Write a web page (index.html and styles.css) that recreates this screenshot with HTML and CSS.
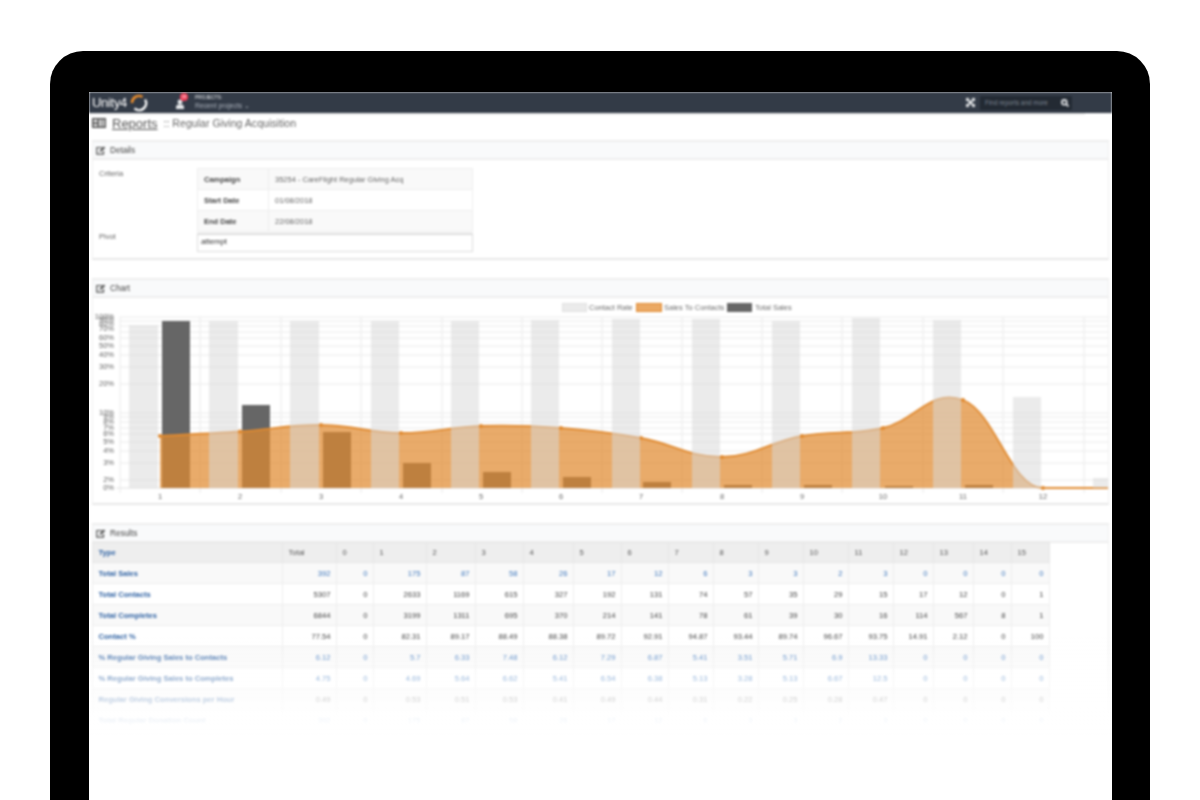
FILE: index.html
```html
<!DOCTYPE html>
<html lang="en">
<head>
<meta charset="utf-8">
<title>Unity4 Reports</title>
<link rel="stylesheet" href="styles.css">
</head>
<body>
<div class="device">
  <div class="screen">
    <div class="screen-inner">
      <header class="topbar">
        <div class="brand">
          <span class="brand-name">Unity4</span>
          <svg class="ring" width="18" height="18" viewBox="0 0 18 18"><path class="ring-w" d="M15.100 5.500A7 7 0 0 1 4.500 14.400"/><path class="ring-o" d="M2 9A7 7 0 0 1 12.500 2.900"/></svg>
        </div>
        <div class="notify">
          <svg width="10" height="12" viewBox="0 0 10 12"><circle class="ico-w" cx="5" cy="4" r="2.400"/><path class="ico-w" d="M1 11V9q0-2 2.400-2.400h3.200Q9 7 9 9v2z"/></svg>
          <span class="badge">18</span>
        </div>
        <div class="projects">
          <span class="projects-label">PROJECTS:</span>
          <span class="projects-link">Recent projects ⌄</span>
        </div>
        <div class="top-right">
          <svg class="expand" width="9" height="9" viewBox="0 0 9 9"><path class="ico-x" d="M1.500 1.500 7.500 7.500M7.500 1.500 1.500 7.500"/><path class="ico-w" d="M0 0h3.500L0 3.500zM9 0v3.500L5.500 0zM0 9V5.500L3.500 9zM9 9H5.500L9 5.500z"/></svg>
          <div class="search">
            <span class="search-text">Find reports and more</span>
            <svg width="8" height="8" viewBox="0 0 8 8"><circle class="ico-s" cx="3.300" cy="3.300" r="2.400"/><path class="ico-s" d="M5 5 7.500 7.500"/></svg>
          </div>
        </div>
      </header>

      <div class="title-row">
        <svg class="title-icon" width="14" height="10" viewBox="0 0 14 10"><path class="title-ico-bg" d="M0 0h14v10H0z"/><path class="title-ico-fg" d="M1.500 1.500h4v3h-4zM1.500 6h4v2.500h-4zM7 1.500h2.500v7H7zM10.500 1.500h2v7h-2z"/></svg>
        <a class="title-link">Reports</a>
        <span class="title-rest">:: Regular Giving Acquisition</span>
      </div>

      <section class="panel">
        <h2 class="panel-head"><svg class="edit" width="10" height="9" viewBox="0 0 10 9"><path class="edit-box" d="M6.500 1.500H.8v6.700h6.700V5"/><path class="edit-pen" d="M3.500 5.800 4 4 7.800.4 9.300 1.800 5.500 5.500z"/></svg>Details</h2>
        <div class="details">
          <div class="detail-label">Criteria</div>
          <table class="criteria">
            <tr><th>Campaign</th><td>35254 - CareFlight Regular Giving Acq</td></tr>
            <tr><th>Start Date</th><td>01/08/2018</td></tr>
            <tr><th>End Date</th><td>22/08/2018</td></tr>
          </table>
          <div class="detail-label pivot-label">Pivot</div>
          <div class="pivot-input">attempt</div>
        </div>
      </section>

      <section class="panel">
        <h2 class="panel-head"><svg class="edit" width="10" height="9" viewBox="0 0 10 9"><path class="edit-box" d="M6.500 1.500H.8v6.700h6.700V5"/><path class="edit-pen" d="M3.500 5.800 4 4 7.800.4 9.300 1.800 5.500 5.500z"/></svg>Chart</h2>
        <svg class="chart" width="1015" height="205" viewBox="93 298 1015 205">
          <g class="grid">
            <path d="M120 317H1108M120 321H1108M120 326H1108M120 332H1108M120 338H1108M120 346H1108M120 355H1108M120 367H1108M120 384H1108M120 413H1108M120 417H1108M120 422H1108M120 428H1108M120 434H1108M120 442H1108M120 451H1108M120 463H1108M120 480H1108"/>
            <path d="M120 317V493M200 317V493M281 317V493M361 317V493M442 317V493M522 317V493M602 317V493M682 317V493M762 317V493M842 317V493M923 317V493M1003 317V493M1084 317V493"/>
          </g>
          <path class="axis" d="M116 488H1108"/>
          <g class="bars-dark">
            <rect x="162" y="321" width="28" height="167"/>
            <rect x="242" y="405" width="28" height="83"/>
            <rect x="323" y="432" width="28" height="56"/>
            <rect x="403" y="463" width="28" height="25"/>
            <rect x="483" y="472" width="28" height="16"/>
            <rect x="563" y="477" width="28" height="11"/>
            <rect x="643" y="482" width="28" height="6"/>
            <rect x="724" y="485" width="28" height="3"/>
            <rect x="804" y="485" width="28" height="3"/>
            <rect x="885" y="486" width="28" height="2"/>
            <rect x="965" y="485" width="28" height="3"/>
          </g>
          <path class="area" d="M160 488V436C176 435 208 433.700 240 431.500C272 429.300 289 424.700 321 425C353 425.300 369 432.800 401 433C433 433.200 449 427 481 426C513 425 529 425.600 561 428C593 430.400 609 432.200 641 438C673 443.800 690 457.400 722 457C754 456.600 770 441.800 802 436C834 430.200 851 435.200 883 428C915 420.800 931 388 963 400C995 412 1011 488 1043 488H1108V488z"/>
          <path class="line" d="M160 436C176 435 208 433.700 240 431.500C272 429.300 289 424.700 321 425C353 425.300 369 432.800 401 433C433 433.200 449 427 481 426C513 425 529 425.600 561 428C593 430.400 609 432.200 641 438C673 443.800 690 457.400 722 457C754 456.600 770 441.800 802 436C834 430.200 851 435.200 883 428C915 420.800 931 388 963 400C995 412 1011 488 1043 488H1108"/>
          <g class="dots">
            <circle cx="160" cy="436" r="2"/><circle cx="240" cy="431.500" r="2"/><circle cx="321" cy="425" r="2"/><circle cx="401" cy="433" r="2"/><circle cx="481" cy="426" r="2"/><circle cx="561" cy="428" r="2"/><circle cx="641" cy="438" r="2"/><circle cx="722" cy="457" r="2"/><circle cx="802" cy="436" r="2"/><circle cx="883" cy="428" r="2"/><circle cx="963" cy="400" r="2"/><circle cx="1043" cy="488" r="2"/>
          </g>
          <g class="bars-grey">
            <rect x="129" y="325" width="29" height="163"/>
            <rect x="209" y="321" width="29" height="167"/>
            <rect x="290" y="321" width="29" height="167"/>
            <rect x="371" y="321" width="28" height="167"/>
            <rect x="451" y="321" width="28" height="167"/>
            <rect x="531" y="320" width="28" height="168"/>
            <rect x="612" y="319" width="28" height="169"/>
            <rect x="692" y="319" width="28" height="169"/>
            <rect x="772" y="321" width="28" height="167"/>
            <rect x="852" y="318" width="28" height="170"/>
            <rect x="933" y="320" width="28" height="168"/>
            <rect x="1013" y="397" width="28" height="91"/>
            <rect x="1093" y="478" width="15" height="10"/>
          </g>
          <g class="y-labels">
            <text x="114" y="319">100%</text><text x="114" y="322">90%</text><text x="114" y="326">80%</text><text x="114" y="331">70%</text><text x="114" y="340">60%</text><text x="114" y="348">50%</text><text x="114" y="357">40%</text><text x="114" y="369">30%</text><text x="114" y="386">20%</text><text x="114" y="415">10%</text><text x="114" y="419">9%</text><text x="114" y="424">8%</text><text x="114" y="430">7%</text><text x="114" y="436">6%</text><text x="114" y="444">5%</text><text x="114" y="453">4%</text><text x="114" y="465">3%</text><text x="114" y="482">2%</text><text x="114" y="490">0%</text>
          </g>
          <g class="x-labels">
            <text x="160" y="499">1</text><text x="240" y="499">2</text><text x="321" y="499">3</text><text x="401" y="499">4</text><text x="481" y="499">5</text><text x="561" y="499">6</text><text x="641" y="499">7</text><text x="722" y="499">8</text><text x="802" y="499">9</text><text x="883" y="499">10</text><text x="963" y="499">11</text><text x="1043" y="499">12</text>
          </g>
          <g class="legend">
            <rect class="sw-grey" x="562.500" y="303.500" width="24" height="8"/><text x="589" y="310">Contact Rate</text>
            <rect class="sw-orange" x="636.500" y="303.500" width="25" height="8"/><text x="664" y="310">Sales To Contacts</text>
            <rect class="sw-dark" x="727" y="303" width="25" height="9"/><text x="755" y="310">Total Sales</text>
          </g>
        </svg>
      </section>

      <section class="panel panel-results">
        <h2 class="panel-head"><svg class="edit" width="10" height="9" viewBox="0 0 10 9"><path class="edit-box" d="M6.500 1.500H.8v6.700h6.700V5"/><path class="edit-pen" d="M3.500 5.800 4 4 7.800.4 9.300 1.800 5.500 5.500z"/></svg>Results</h2>
        <table class="results">
          <colgroup><col><col><col><col><col><col><col><col><col><col><col><col><col><col><col><col><col><col></colgroup>
          <thead>
            <tr><th class="type">Type</th><th>Total</th><th>0</th><th>1</th><th>2</th><th>3</th><th>4</th><th>5</th><th>6</th><th>7</th><th>8</th><th>9</th><th>10</th><th>11</th><th>12</th><th>13</th><th>14</th><th>15</th></tr>
          </thead>
          <tbody>
            <tr class="link-row"><th>Total Sales</th><td>392</td><td>0</td><td>175</td><td>87</td><td>58</td><td>26</td><td>17</td><td>12</td><td>6</td><td>3</td><td>3</td><td>2</td><td>3</td><td>0</td><td>0</td><td>0</td><td>0</td></tr>
            <tr><th>Total Contacts</th><td>5307</td><td>0</td><td>2633</td><td>1169</td><td>615</td><td>327</td><td>192</td><td>131</td><td>74</td><td>57</td><td>35</td><td>29</td><td>15</td><td>17</td><td>12</td><td>0</td><td>1</td></tr>
            <tr><th>Total Completes</th><td>6844</td><td>0</td><td>3199</td><td>1311</td><td>695</td><td>370</td><td>214</td><td>141</td><td>78</td><td>61</td><td>39</td><td>30</td><td>16</td><td>114</td><td>567</td><td>8</td><td>1</td></tr>
            <tr><th>Contact %</th><td>77.54</td><td>0</td><td>82.31</td><td>89.17</td><td>88.49</td><td>88.38</td><td>89.72</td><td>92.91</td><td>94.87</td><td>93.44</td><td>89.74</td><td>96.67</td><td>93.75</td><td>14.91</td><td>2.12</td><td>0</td><td>100</td></tr>
            <tr class="link-row"><th>% Regular Giving Sales to Contacts</th><td>6.12</td><td>0</td><td>5.7</td><td>6.33</td><td>7.48</td><td>6.12</td><td>7.29</td><td>6.87</td><td>5.41</td><td>3.51</td><td>5.71</td><td>6.9</td><td>13.33</td><td>0</td><td>0</td><td>0</td><td>0</td></tr>
            <tr class="link-row"><th>% Regular Giving Sales to Completes</th><td>4.75</td><td>0</td><td>4.69</td><td>5.64</td><td>6.62</td><td>5.41</td><td>6.54</td><td>6.38</td><td>5.13</td><td>3.28</td><td>5.13</td><td>6.67</td><td>12.5</td><td>0</td><td>0</td><td>0</td><td>0</td></tr>
            <tr class="plain-row"><th>Regular Giving Conversions per Hour</th><td>0.49</td><td>0</td><td>0.53</td><td>0.51</td><td>0.53</td><td>0.41</td><td>0.49</td><td>0.44</td><td>0.31</td><td>0.22</td><td>0.25</td><td>0.28</td><td>0.47</td><td>0</td><td>0</td><td>0</td><td>0</td></tr>
            <tr class="link-row"><th>Total Regular Donation Count</th><td>392</td><td>0</td><td>175</td><td>87</td><td>58</td><td>26</td><td>17</td><td>12</td><td>6</td><td>3</td><td>3</td><td>2</td><td>3</td><td>0</td><td>0</td><td>0</td><td>0</td></tr>
          </tbody>
        </table>
      </section>
    </div>
    <div class="fade"></div>
  </div>
</div>
</body>
</html>
```

FILE: styles.css
```css
* { box-sizing: border-box; }
html, body { margin: 0; height: 800px; overflow: hidden; background: #fff; }
body { font-family: "Liberation Sans", Arial, sans-serif; color: #555; }

.device {
  margin: 51px 50px 0;
  height: 749px;
  padding: 41px 38px 0 39px;
  background: #000;
  border-radius: 33px 33px 0 0;
}
.screen { position: relative; height: 100%; background: #fff; overflow: hidden; }
.screen-inner { height: 100%; overflow: hidden; filter: blur(0.8px); }

.topbar {
  display: flex;
  align-items: center;
  height: 21px;
  padding: 0 40px 0 3px;
  background: #333b47;
  color: #c8ccd2;
}
.brand { display: flex; align-items: center; gap: 3px; width: 83px; }
.brand-name { font-size: 13px; letter-spacing: -0.3px; color: #fff; }
.ring { flex: none; }
.ring-w, .ring-o { fill: none; stroke-width: 2.400; }
.ring-w { stroke: #fff; }
.ring-o { stroke: #ee8f2c; }
.notify { position: relative; display: flex; width: 20px; height: 14px; }
.notify svg { margin-top: 2px; }
.ico-w { fill: #e6e8ea; }
.ico-x { stroke: #e6e8ea; stroke-width: 1.800; fill: none; }
.ico-s { stroke: #eef0f2; stroke-width: 1.600; fill: none; }
.badge {
  position: absolute;
  left: 5px;
  top: -3px;
  width: 8px;
  height: 8px;
  border-radius: 50%;
  background: #f0405a;
  font-size: 4px;
  line-height: 8px;
  text-align: center;
  color: #fff;
}
.projects { display: flex; flex-direction: column; gap: 2px; padding-top: 1px; line-height: 1; }
.projects-label { font-size: 4.800px; color: #eceef0; }
.projects-link { font-size: 6.800px; color: #aab1bb; }
.top-right { margin-left: auto; display: flex; align-items: center; gap: 5px; }
.search {
  display: flex;
  align-items: center;
  justify-content: space-between;
  width: 92px;
  height: 14px;
  padding: 0 3px 0 5px;
  background: #232a33;
  border-radius: 1px;
}
.search-text { font-size: 6.400px; color: #7d8590; }

.title-row {
  display: flex;
  align-items: center;
  height: 27px;
  margin-right: 27px;
  padding: 0 0 9px 3px;
  border-top: 2px solid #eee;
}
.title-ico-bg { fill: #555; }
.title-ico-fg { fill: #ddd; }
.title-icon { margin-right: 6px; }
.title-link { font-size: 13px; color: #555; text-decoration: underline; margin-right: 6px; }
.title-rest { font-size: 10.600px; color: #666; }

.panel {
  margin: 0 3px 18px;
  border: 1px solid #f0f0f0;
  border-top: 2px solid #eee;
  border-bottom: 2px solid #e8e8e8;
  background: #fff;
}
.panel-results { border-bottom: 0; margin-bottom: 0; }
.panel-head {
  display: flex;
  align-items: center;
  gap: 4px;
  height: 18px;
  margin: 0;
  padding: 0 3px;
  background: #f9fafb;
  border-bottom: 2px solid #eee;
  font-size: 8.200px;
  font-weight: normal;
  color: #444;
}
.edit-box { fill: none; stroke: #555; stroke-width: 1.200; }
.edit-pen { fill: #555; }

.details {
  display: grid;
  grid-template-columns: 98px 276px;
  padding: 8px 0 0 6px;
  height: 98px;
  align-content: start;
}
.detail-label { font-size: 7.500px; color: #666; padding-top: 1px; }
.pivot-label { padding-top: 0; }
.criteria { border-collapse: collapse; width: 276px; font-size: 7.500px; }
.criteria th, .criteria td { height: 21px; padding: 0 6px; border: 1px solid #eee; text-align: left; }
.criteria th { width: 71px; color: #444; }
.criteria td { color: #666; }
.criteria tr:nth-child(odd) { background: #f9f9f9; }
.pivot-input {
  height: 19px;
  margin-top: 1px;
  padding: 0 3px;
  border: 1px solid #ddd;
  border-top-width: 2px;
  font-size: 7.800px;
  line-height: 14px;
  color: #333;
}

.chart { display: block; }
.grid path { fill: none; stroke: #eaeaea; stroke-width: 1; }
.axis { fill: none; stroke: #e0e0e0; stroke-width: 1; }
.bars-dark rect { fill: #666; }
.area { fill: rgba(224, 138, 48, 0.72); }
.line { fill: none; stroke: #e08a30; stroke-width: 1.800; }
.dots circle { fill: #e08a30; }
.bars-grey rect { fill: rgba(216, 216, 216, 0.52); }
.y-labels text { font-size: 7.500px; fill: #666; text-anchor: end; }
.x-labels text { font-size: 7.500px; fill: #666; text-anchor: middle; }
.legend text { font-size: 7.500px; fill: #6c6c6c; }
.sw-grey { fill: #ebebeb; stroke: #e0e0e0; }
.sw-orange { fill: #eba964; stroke: #e08a30; }
.sw-dark { fill: #666; }

.results { table-layout: fixed; width: 957px; border-collapse: collapse; font-size: 7.600px; margin: -1px 0 0 -1px; }
.results col:nth-child(1) { width: 190px; }
.results col:nth-child(2) { width: 54px; }
.results col:nth-child(3) { width: 37px; }
.results col:nth-child(4) { width: 53px; }
.results col:nth-child(5) { width: 49px; }
.results col:nth-child(6) { width: 48px; }
.results col:nth-child(7) { width: 50px; }
.results col:nth-child(8) { width: 48px; }
.results col:nth-child(9) { width: 47px; }
.results col:nth-child(n+10):nth-child(-n+14) { width: 45px; }
.results col:nth-child(15), .results col:nth-child(16) { width: 40px; }
.results col:nth-child(17), .results col:nth-child(18) { width: 38px; }
.results th, .results td { height: 21px; padding: 0 5.500px; border: 1px solid #eee; white-space: nowrap; overflow: hidden; }
.results thead th { height: 20px; background: #eee; border-color: #e6e6e6; font-weight: normal; color: #555; text-align: left; }
.results thead .type { font-weight: bold; color: #2f62a3; }
.results tbody th { font-weight: bold; color: #2f62a3; text-align: left; }
.results td { text-align: right; color: #444; }
.results .link-row td { color: #3f78bd; }
.results .plain-row td { color: #666; }
.results tbody tr:nth-child(odd) { background: #f9f9f9; }

.fade {
  position: absolute;
  left: 0;
  right: 0;
  top: 543px;
  height: 100px;
  background: linear-gradient(to bottom, rgba(255,255,255,0), rgba(255,255,255,0.97) 90%, #fff);
}
```
